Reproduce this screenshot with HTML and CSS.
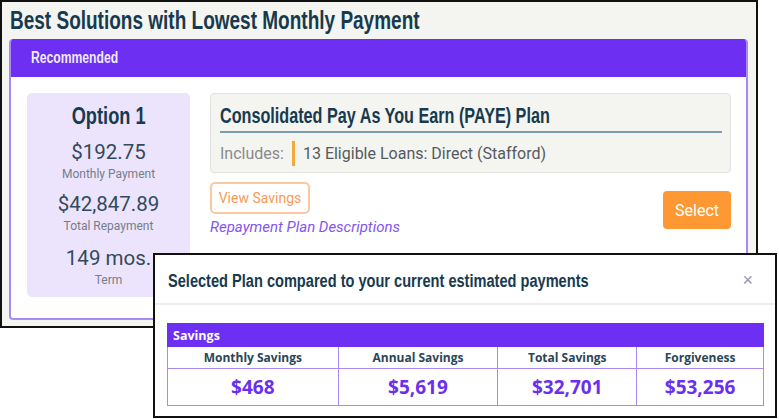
FILE: index.html
```html
<!DOCTYPE html>
<html>
<head>
<meta charset="utf-8">
<link rel="stylesheet" href="styles.css">
</head>
<body>
<div class="frame">
  <h1 class="page-title"><span class="cond">Best Solutions with Lowest Monthly Payment</span></h1>
  <div class="card">
    <div class="card-head"><span class="cond">Recommended</span></div>
    <div class="card-body">
      <div class="option">
        <div class="opt-title"><span class="cond cond-c">Option 1</span></div>
        <div class="stat"><div class="val">$192.75</div><div class="lbl">Monthly Payment</div></div>
        <div class="stat"><div class="val">$42,847.89</div><div class="lbl">Total Repayment</div></div>
        <div class="stat stat-last"><div class="val">149 mos.</div><div class="lbl">Term</div></div>
      </div>
      <div class="plan-col">
        <div class="plan-box">
          <div class="plan-name"><span class="cond">Consolidated Pay As You Earn (PAYE) Plan</span></div>
          <div class="includes">
            <span class="inc-lbl">Includes:</span>
            <span class="inc-bar"></span>
            <span class="inc-txt">13 Eligible Loans: Direct (Stafford)</span>
          </div>
        </div>
        <div class="actions">
          <div class="act-left">
            <button class="btn-outline">View Savings</button>
            <a class="desc-link">Repayment Plan Descriptions</a>
          </div>
          <button class="btn-select">Select</button>
        </div>
      </div>
    </div>
  </div>
</div>

<div class="modal">
  <div class="modal-head">
    <span class="modal-title"><span class="cond">Selected Plan compared to your current estimated payments</span></span>
    <span class="modal-close">&times;</span>
  </div>
  <div class="modal-body">
    <table class="sav-table">
      <tr><th class="sav-cap" colspan="4">Savings</th></tr>
      <tr class="col-heads">
        <td class="c1">Monthly Savings</td>
        <td class="c2">Annual Savings</td>
        <td class="c3">Total Savings</td>
        <td class="c4">Forgiveness</td>
      </tr>
      <tr class="vals">
        <td>$468</td>
        <td>$5,619</td>
        <td>$32,701</td>
        <td>$53,256</td>
      </tr>
    </table>
  </div>
</div>
</body>
</html>
```

FILE: styles.css
```css
* { box-sizing: border-box; }
html, body { margin: 0; padding: 0; background: #ffffff; }
body { position: relative; width: 779px; height: 419px; overflow: hidden; font-family: Roboto, "Liberation Sans", sans-serif; }

/* condensed display face (Oswald-like) */
.cond {
  display: inline-block;
  white-space: nowrap;
  font-family: "Liberation Sans", Arial, sans-serif;
  font-weight: bold;
  transform: scaleX(0.76);
  transform-origin: left center;
}
.cond-c { transform-origin: center center; }

.frame {
  width: 758px;
  height: 328px;
  border: 2px solid #111;
  background: #f4f4f0;
  padding: 0 0 0 7px;
}

.page-title {
  margin: 0;
  padding: 3px 0 0 1px;
  height: 37px;
  font-size: 25px;
  line-height: 30px;
  color: #173a4f;
}

.card {
  width: 739px;
  height: 281px;
  border: 2px solid #a98af5;
  border-top: none;
  border-radius: 4px;
  background: #ffffff;
  overflow: hidden;
}

.card-head {
  height: 38px;
  background: #6d2ff2;
  color: #f1ebff;
  font-size: 16px;
  line-height: 38px;
  padding-left: 20px;
}

.card-body {
  display: flex;
  gap: 20px;
  padding: 16px 15px 0 16px;
}

.option {
  width: 163px;
  height: 204px;
  background: #ece4fd;
  border-radius: 5px;
  text-align: center;
  padding-top: 8px;
}

.opt-title {
  font-size: 24px;
  line-height: 30px;
  color: #173a4f;
}

.stat { margin-top: 8px; }
.stat:first-of-type { margin-top: 5px; }
.stat-last { margin-top: 10px; }
.val { font-size: 20.5px; line-height: 26px; color: #34495e; }
.lbl { font-size: 12px; line-height: 18px; color: #767d86; }

.plan-col { flex: 1; display: flex; flex-direction: column; }

.plan-box {
  height: 80px;
  background: #f4f4f0;
  border: 1px solid #e2e2de;
  border-radius: 4px;
  padding: 8px 8px 0 9px;
}

.plan-name {
  font-size: 21.3px;
  line-height: 28px;
  color: #173a4f;
  border-bottom: 2px solid #7a9cae;
  padding-bottom: 1px;
}

.includes {
  display: flex;
  align-items: center;
  margin-top: 8px;
  font-size: 16px;
  line-height: 22px;
}
.inc-lbl { color: #8a8a8a; }
.inc-bar { width: 3px; height: 25px; background: #f6a93b; margin: 0 8px 0 8px; }
.inc-txt { color: #555a5e; }

.actions {
  display: flex;
  align-items: center;
  justify-content: space-between;
  margin-top: 9px;
}

.act-left { display: flex; flex-direction: column; align-items: flex-start; }

.btn-outline {
  height: 32px;
  width: 100px;
  border: 2px solid #fbc9a0;
  border-radius: 5px;
  background: #ffffff;
  color: #f89a57;
  font-family: Roboto, "Liberation Sans", sans-serif;
  font-size: 14px;
  padding: 0;
}

.desc-link {
  margin-top: 3px;
  font-style: italic;
  font-size: 15px;
  line-height: 20px;
  color: #8455ef;
}

.btn-select {
  width: 68px;
  height: 38px;
  margin-top: 1px;
  border: none;
  border-radius: 4px;
  background: #fd9833;
  color: #ffffff;
  font-family: Roboto, "Liberation Sans", sans-serif;
  font-size: 16px;
  padding: 0;
}

/* modal overlay */
.modal {
  position: absolute;
  left: 153px;
  top: 253px;
  width: 624px;
  height: 165px;
  border: 2px solid #111;
  background: #ffffff;
}

.modal-head {
  height: 50px;
  border-bottom: 2px solid #eeeeee;
  display: flex;
  align-items: center;
  justify-content: space-between;
  padding: 2px 22px 0 13px;
}

.modal-title {
  font-size: 19.2px;
  color: #173a4f;
}

.modal-close { font-size: 18px; color: #8a9aa8; font-family: "Liberation Sans", sans-serif; }

.modal-body { padding: 18px 11px 0 12px; }

.sav-table {
  width: 597px;
  border-collapse: collapse;
  font-family: "Open Sans", sans-serif;
}

.sav-cap {
  background: #6d2ff2;
  color: #ffffff;
  text-align: left;
  font-size: 12.5px;
  font-weight: bold;
  height: 23px;
  padding: 0 0 0 5px;
  border: 1.5px solid #6d2ff2;
}

.sav-table td {
  border: 1.5px solid #a98af5;
  text-align: center;
  padding: 0;
}

.col-heads td {
  height: 22px;
  font-size: 12px;
  font-weight: bold;
  color: #2a4656;
}
.c1 { width: 171px; }
.c2 { width: 160px; }
.c3 { width: 139px; }
.c4 { width: 127px; }

.vals td {
  height: 37px;
  font-size: 19px;
  font-weight: bold;
  color: #6a2ff0;
}
```
